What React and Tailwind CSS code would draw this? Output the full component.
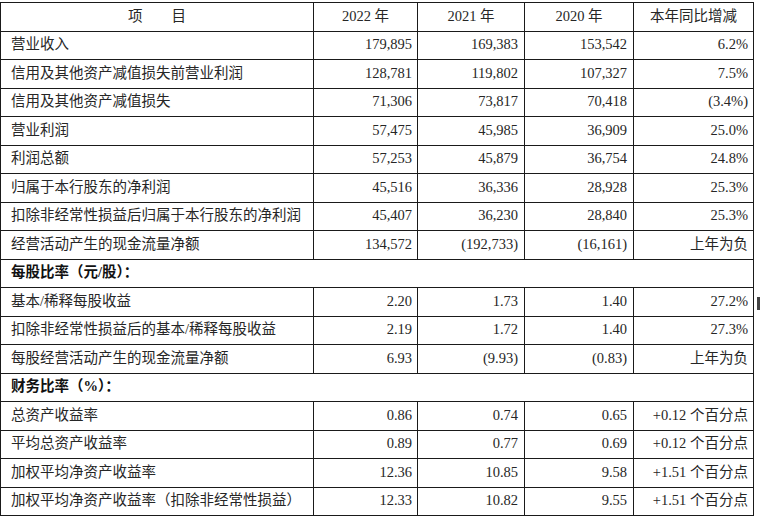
import React from "react";

const rows = [
  ["营业收入", "179,895", "169,383", "153,542", "6.2%"],
  ["信用及其他资产减值损失前营业利润", "128,781", "119,802", "107,327", "7.5%"],
  ["信用及其他资产减值损失", "71,306", "73,817", "70,418", "(3.4%)"],
  ["营业利润", "57,475", "45,985", "36,909", "25.0%"],
  ["利润总额", "57,253", "45,879", "36,754", "24.8%"],
  ["归属于本行股东的净利润", "45,516", "36,336", "28,928", "25.3%"],
  ["扣除非经常性损益后归属于本行股东的净利润", "45,407", "36,230", "28,840", "25.3%"],
  ["经营活动产生的现金流量净额", "134,572", "(192,733)", "(16,161)", "上年为负"],
  { section: "每股比率（元/股）：" },
  ["基本/稀释每股收益", "2.20", "1.73", "1.40", "27.2%"],
  ["扣除非经常性损益后的基本/稀释每股收益", "2.19", "1.72", "1.40", "27.3%"],
  ["每股经营活动产生的现金流量净额", "6.93", "(9.93)", "(0.83)", "上年为负"],
  { section: "财务比率（%）：" },
  ["总资产收益率", "0.86", "0.74", "0.65", "+0.12 个百分点"],
  ["平均总资产收益率", "0.89", "0.77", "0.69", "+0.12 个百分点"],
  ["加权平均净资产收益率", "12.36", "10.85", "9.58", "+1.51 个百分点"],
  ["加权平均净资产收益率（扣除非经常性损益）", "12.33", "10.82", "9.55", "+1.51 个百分点"],
];

const cell = "border border-[#1a1a1a] p-0";

export default function App() {
  return (
    <div className="relative w-[760px] h-[520px] bg-white pt-[2px] font-['Liberation_Serif','Noto_Sans_CJK_SC',serif] text-[14.5px] text-[#262626]">
      <table className="table-fixed border-collapse w-[753px]">
        <colgroup>
          <col className="w-[313px]" />
          <col className="w-[104px]" />
          <col className="w-[107px]" />
          <col className="w-[109px]" />
          <col className="w-[120px]" />
        </colgroup>
        <thead>
          <tr className="h-[28.5px]">
            <th className={`${cell} font-normal text-center`}>项　　目</th>
            <th className={`${cell} font-normal text-center`}>2022 年</th>
            <th className={`${cell} font-normal text-center`}>2021 年</th>
            <th className={`${cell} font-normal text-center`}>2020 年</th>
            <th className={`${cell} font-normal text-center`}>本年同比增减</th>
          </tr>
        </thead>
        <tbody>
          {rows.map((r, i) =>
            r.section ? (
              <tr key={i} className="h-[28.5px]">
                <td colSpan={5} className={`${cell} pl-[10px] font-bold text-[#111]`}>
                  {r.section}
                </td>
              </tr>
            ) : (
              <tr key={i} className="h-[28.5px]">
                <td className={`${cell} pl-[10px] whitespace-nowrap`}>{r[0]}</td>
                <td className={`${cell} text-right pr-[5px]`}>{r[1]}</td>
                <td className={`${cell} text-right pr-[6px]`}>{r[2]}</td>
                <td className={`${cell} text-right pr-[6px]`}>{r[3]}</td>
                <td className={`${cell} text-right pr-[5px]`}>{r[4]}</td>
              </tr>
            )
          )}
        </tbody>
      </table>
      <div className="absolute left-[757px] top-[297px] w-[3px] h-[13px] bg-[#444]" />
    </div>
  );
}
